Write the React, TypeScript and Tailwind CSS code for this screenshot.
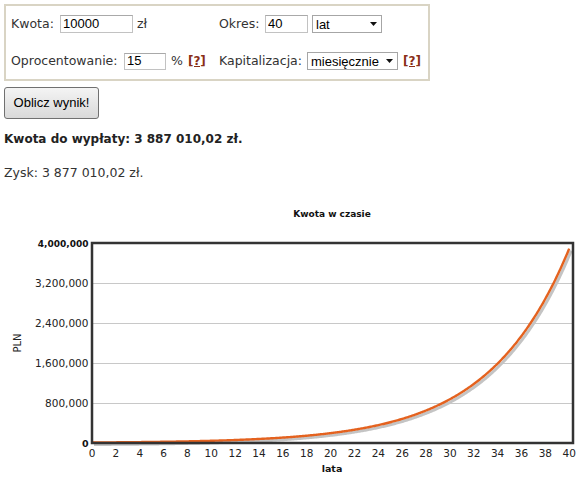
import React from "react";

const VERDANA = { fontFamily: '"DejaVu Sans", Verdana, sans-serif' };

function SelectBox({ value, width }: { value: string; width: string }) {
  return (
    <div
      className={`${width} h-[18px] flex items-center justify-between border border-[#a6a6a6] bg-white pl-[3px] pr-[4px] text-[13px] text-black`}
      style={{ fontFamily: '"Liberation Sans", Arial, sans-serif' }}
    >
      <span className="leading-none">{value}</span>
      <svg width="7" height="4" viewBox="0 0 7 4">
        <path d="M0 0 L7 0 L3.5 4 Z" fill="#111" />
      </svg>
    </div>
  );
}

function TextBox({ value, width, height }: { value: string; width: string; height: string }) {
  return (
    <input
      readOnly
      value={value}
      className={`${width} ${height} border border-[#c2c2c2] border-t-[#a9a9a9] bg-white px-[2px] text-[13px] text-black outline-none`}
      style={{ fontFamily: '"Liberation Sans", Arial, sans-serif' }}
    />
  );
}

function HelpLink() {
  return (
    <a href="#" className="font-bold underline text-[#8a2f17] text-[12px] leading-none">
      [?]
    </a>
  );
}

// Future value with monthly capitalisation: 10 000 zł, 15% p.a., 40 years
function buildCurve() {
  const pts: string[] = [];
  const x0 = 92;
  const stepYear = 11.93;
  for (let m = 0; m <= 480; m++) {
    const v = 10000 * Math.pow(1 + 0.15 / 12, m);
    const x = x0 + (m / 12) * stepYear;
    const y = 243 - (v / 4000000) * 200;
    pts.push(`${x.toFixed(2)},${y.toFixed(2)}`);
  }
  return pts.join(" ");
}

function Chart() {
  const curve = buildCurve();
  const grid = [
    { y: 83, label: "3,200,000" },
    { y: 123, label: "2,400,000" },
    { y: 163, label: "1,600,000" },
    { y: 203, label: "800,000" },
  ];
  const years = Array.from({ length: 21 }, (_, i) => i * 2);
  return (
    <svg width="588" height="280" viewBox="0 0 588 280" className="block" style={VERDANA}>
      <text x="332" y="17" textAnchor="middle" fontSize="9" fontWeight="bold" fill="#111">
        Kwota w czasie
      </text>
      {grid.map((g) => (
        <g key={g.label}>
          <line x1="93" x2="572" y1={g.y + 0.5} y2={g.y + 0.5} stroke="#c8c8c8" strokeWidth="1" />
          <text x="88.5" y={g.y + 4} textAnchor="end" fontSize="10.5" fill="#222">
            {g.label}
          </text>
        </g>
      ))}
      <text x="88.5" y="46.5" textAnchor="end" fontSize="9" fontWeight="bold" fill="#111">
        4,000,000
      </text>
      <text x="88.5" y="246.5" textAnchor="end" fontSize="9.5" fontWeight="bold" fill="#111">
        0
      </text>
      {years.map((yr) => (
        <text key={yr} x={92 + yr * 11.93} y="257" textAnchor="middle" fontSize="10.5" fill="#222">
          {yr}
        </text>
      ))}
      <text x="332" y="272" textAnchor="middle" fontSize="9.5" fontWeight="bold" fill="#111">
        lata
      </text>
      <text
        x="0"
        y="0"
        transform="translate(20.5 143) rotate(-90)"
        textAnchor="middle"
        fontSize="10"
        fill="#222"
      >
        PLN
      </text>
      {/* curve shadow */}
      <polyline
        points={curve}
        fill="none"
        stroke="#c4c4c4"
        strokeWidth="3"
        strokeLinejoin="round"
        transform="translate(2 2)"
      />
      <polyline points={curve} fill="none" stroke="#e4621f" strokeWidth="2.4" strokeLinejoin="round" />
      {/* plot frame */}
      <rect x="92" y="43" width="481" height="200" fill="none" stroke="#333" strokeWidth="2.5" />
    </svg>
  );
}

export default function App() {
  return (
    <div className="w-[588px] h-[480px] bg-white overflow-hidden text-[#333]" style={VERDANA}>
      <div className="h-[200px] pt-[4px] pl-[4px]">
        <div className="w-[426px] h-[77px] border-2 border-[#d9d4c4] pl-[5px] pt-[8px] flex flex-col gap-[17px] text-[12.5px]">
          <div className="h-[20px] flex items-center">
            <div className="w-[208px] flex items-center">
              <span className="w-[49px]">Kwota:</span>
              <TextBox value="10000" width="w-[73px]" height="h-[18px]" />
              <span className="ml-[4px]">zł</span>
            </div>
            <div className="flex items-center">
              <span className="w-[46px]">Okres:</span>
              <TextBox value="40" width="w-[43px]" height="h-[18px]" />
              <div className="ml-[4px]">
                <SelectBox value="lat" width="w-[70px]" />
              </div>
            </div>
          </div>
          <div className="h-[20px] flex items-center">
            <div className="w-[208px] flex items-center">
              <span className="w-[113px]">Oprocentowanie:</span>
              <TextBox value="15" width="w-[42px]" height="h-[17px]" />
              <span className="ml-[5px]">%</span>
              <span className="ml-[5px]">
                <HelpLink />
              </span>
            </div>
            <div className="flex items-center">
              <span className="w-[88px]">Kapitalizacja:</span>
              <SelectBox value="miesięcznie" width="w-[91px]" />
              <span className="ml-[5px]">
                <HelpLink />
              </span>
            </div>
          </div>
        </div>
        <button
          className="mt-[6px] w-[95px] h-[32px] rounded-[3px] border border-[#707070] bg-gradient-to-b from-[#f4f4f4] to-[#d9d9d9] text-[13px] text-black"
          style={{ fontFamily: '"Liberation Sans", Arial, sans-serif' }}
        >
          Oblicz wynik!
        </button>
        <p className="mt-[12px] text-[12px] font-bold text-[#222] leading-[16px]">
          Kwota do wypłaty: 3 887 010,02 zł.
        </p>
        <p className="mt-[18px] text-[12.5px] text-[#333] leading-[16px]">Zysk: 3 877 010,02 zł.</p>
      </div>
      <Chart />
    </div>
  );
}
